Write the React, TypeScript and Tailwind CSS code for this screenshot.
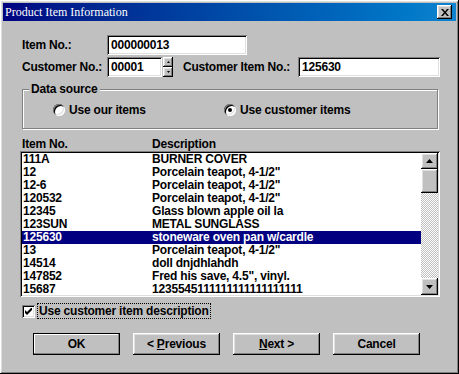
import React from 'react';

const raised = 'shadow-[inset_-1px_-1px_#000,inset_1px_1px_#fff,inset_-2px_-2px_#808080,inset_2px_2px_#dfdfdf]';
const sunken = 'shadow-[inset_1px_1px_#808080,inset_-1px_-1px_#fff,inset_2px_2px_#000,inset_-2px_-2px_#dfdfdf]';

const rows: [string, string][] = [
  ['111A', 'BURNER COVER'],
  ['12', 'Porcelain teapot, 4-1/2"'],
  ['12-6', 'Porcelain teapot, 4-1/2"'],
  ['120532', 'Porcelain teapot, 4-1/2"'],
  ['12345', 'Glass blown apple oil la'],
  ['123SUN', 'METAL SUNGLASS'],
  ['125630', 'stoneware oven pan w/cardle'],
  ['13', 'Porcelain teapot, 4-1/2"'],
  ['14514', 'doll dnjdhlahdh'],
  ['147852', 'Fred his save, 4.5", vinyl.'],
  ['15687', '1235545111111111111111111'],
];

const Arrow = ({ down = false }: { down?: boolean }) => (
  <svg width="7" height="4" viewBox="0 0 7 4">
    {down ? <path d="M0 0h7L3.5 4z" fill="#000" /> : <path d="M0 4h7L3.5 0z" fill="#000" />}
  </svg>
);

const Radio = ({ checked, label }: { checked?: boolean; label: string }) => (
  <div className="flex items-center">
    <div className={`w-[12px] h-[12px] rounded-full bg-white ${sunken} flex items-center justify-center`}>
      {checked && <div className="w-[4px] h-[4px] rounded-full bg-black" />}
    </div>
    <span className="ml-[4px]">{label}</span>
  </div>
);

const Button = ({ children, isDefault = false }: { children: React.ReactNode; isDefault?: boolean }) => (
  <div
    className={`w-[87px] h-[22px] flex items-center justify-center bg-[#c0c0c0] ${
      isDefault ? 'border border-black shadow-[inset_-1px_-1px_#808080,inset_1px_1px_#fff]' : raised
    }`}
  >
    {children}
  </div>
);

export default function App() {
  return (
    <div
      className={`w-[459px] h-[374px] p-[3px] bg-[#c0c0c0] ${raised} font-['Liberation_Sans',Arial,sans-serif] font-bold text-[12px] tracking-[-0.2px] text-black overflow-hidden`}
    >
      {/* title bar */}
      <div className="h-[18px] flex items-center justify-between bg-linear-to-r from-[#000080] to-[#1084d0]">
        <span className="pl-[2px] text-white font-normal tracking-normal font-['Liberation_Serif',serif] text-[12px]">
          Product Item Information
        </span>
        <div className={`w-[15px] h-[14px] mr-[4px] bg-[#c0c0c0] ${raised} flex items-center justify-center`}>
          <svg width="8" height="7" viewBox="0 0 8 7">
            <path d="M0 0h2l2 2.5L6 0h2L5 3.5 8 7H6L4 4.5 2 7H0l3-3.5z" fill="#000" />
          </svg>
        </div>
      </div>

      <div className="pl-[19px]">
        {/* item no */}
        <div className="mt-[14px] h-[20px] flex items-center">
          <span className="w-[85px]">Item No.:</span>
          <div className={`w-[140px] h-[20px] bg-white ${sunken} pl-[4px] flex items-center`}>000000013</div>
        </div>

        {/* customer */}
        <div className="mt-[2px] h-[20px] flex items-center">
          <span className="w-[85px]">Customer No.:</span>
          <div className={`w-[55px] h-[20px] bg-white ${sunken} pl-[4px] flex items-center`}>00001</div>
          <div className="ml-[1px] w-[10px] h-[20px] flex flex-col">
            <div className={`h-[10px] bg-[#c0c0c0] ${raised} flex items-center justify-center`}>
              <svg width="3" height="2" viewBox="0 0 3 2"><path d="M0 2h3L1.5 0z" fill="#000" /></svg>
            </div>
            <div className={`h-[10px] bg-[#c0c0c0] ${raised} flex items-center justify-center`}>
              <svg width="3" height="2" viewBox="0 0 3 2"><path d="M0 0h3L1.5 2z" fill="#000" /></svg>
            </div>
          </div>
          <span className="ml-[10px] w-[115px]">Customer Item No.:</span>
          <div className={`w-[142px] h-[20px] bg-white ${sunken} pl-[4px] flex items-center`}>125630</div>
        </div>

        {/* data source */}
        <div className="relative mt-[12px] w-[416px] h-[40px] border border-[#808080] shadow-[1px_1px_0_#fff,inset_1px_1px_0_#fff] flex items-center pt-[1px]">
          <span className="absolute -top-[8px] left-[6px] px-[2px] bg-[#c0c0c0] leading-[14px]">Data source</span>
          <div className="ml-[30px] w-[171px]">
            <Radio label="Use our items" />
          </div>
          <Radio checked label="Use customer items" />
        </div>

        {/* list header */}
        <div className="mt-[8px] h-[14px] leading-[14px] flex">
          <span className="w-[130px]">Item No.</span>
          <span>Description</span>
        </div>

        {/* list */}
        <div className={`-ml-[2px] w-[420px] h-[146px] bg-white ${sunken} p-[2px] flex`}>
          <div className="flex-1 overflow-hidden">
            {rows.map(([no, desc]) => (
              <div
                key={no}
                className={`h-[13px] leading-[13px] flex ${no === '125630' ? 'bg-[#000080] text-white' : ''}`}
              >
                <span className="w-[130px] pl-[1px]">{no}</span>
                <span className="whitespace-nowrap">{desc}</span>
              </div>
            ))}
          </div>
          <div className="w-[17px] flex flex-col bg-[repeating-conic-gradient(#c0c0c0_0_25%,#fff_0_50%)] bg-[length:2px_2px]">
            <div className={`h-[16px] bg-[#c0c0c0] ${raised} flex items-center justify-center`}>
              <Arrow />
            </div>
            <div className={`h-[24px] bg-[#c0c0c0] ${raised}`} />
            <div className="flex-1" />
            <div className={`h-[17px] bg-[#c0c0c0] ${raised} flex items-center justify-center`}>
              <Arrow down />
            </div>
          </div>
        </div>

        {/* checkbox */}
        <div className="mt-[6px] h-[16px] flex items-center">
          <div className={`w-[13px] h-[13px] bg-white ${sunken} flex items-center justify-center`}>
            <svg width="7" height="7" viewBox="0 0 7 7">
              <path d="M0 2v3l2 2 5-5V-1L2 4z" fill="#000" />
            </svg>
          </div>
          <span className="ml-[2px] px-[1px] h-[16px] leading-[14px] border border-dotted border-black">
            Use customer item description
          </span>
        </div>

        {/* buttons */}
        <div className="mt-[14px] ml-[11px] flex gap-[13px]">
          <Button isDefault>OK</Button>
          <Button>
            &lt; <span className="underline ml-[3px]">P</span>revious
          </Button>
          <Button>
            <span className="underline">N</span>ext &gt;
          </Button>
          <Button>Cancel</Button>
        </div>
      </div>
    </div>
  );
}
